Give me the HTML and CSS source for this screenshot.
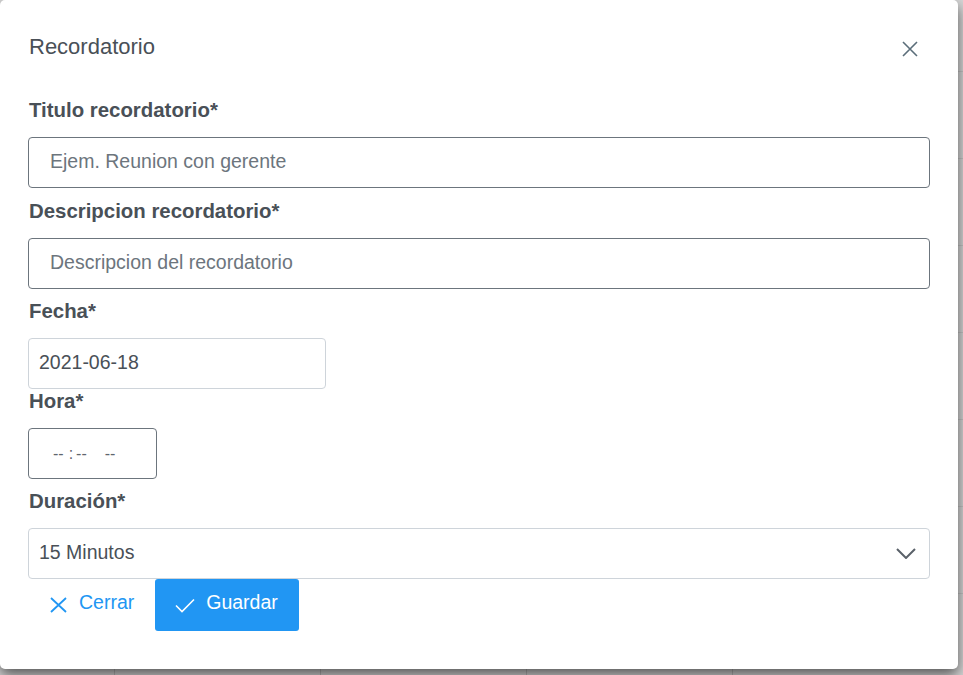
FILE: index.html
```html
<!DOCTYPE html>
<html lang="es">
<head>
<meta charset="utf-8">
<title>Recordatorio</title>
<link rel="stylesheet" href="styles.css">
</head>
<body>
<div class="modal">
  <div class="modal-header">
    <h5 class="modal-title">Recordatorio</h5>
    <button class="close" type="button" aria-label="Cerrar">
      <svg width="16" height="16" viewBox="0 0 16 16"><path d="M1 1L15 15M15 1L1 15" fill="none" stroke="#5b6e7a" stroke-width="1.6"/></svg>
    </button>
  </div>
  <form class="modal-body">
    <div class="group group-first">
      <label class="label">Titulo recordatorio*</label>
      <input class="input input-dark" type="text" placeholder="Ejem. Reunion con gerente">
    </div>
    <div class="group">
      <label class="label">Descripcion recordatorio*</label>
      <input class="input input-dark" type="text" placeholder="Descripcion del recordatorio">
    </div>
    <div class="group group-tight">
      <label class="label">Fecha*</label>
      <input class="input input-light input-date" type="text" value="2021-06-18">
    </div>
    <div class="group">
      <label class="label">Hora*</label>
      <div class="time-field">
        <span class="seg">--</span><span class="colon">:</span><span class="seg">--</span><span class="seg seg-ampm">--</span>
      </div>
    </div>
    <div class="group group-last">
      <label class="label">Duración*</label>
      <div class="select">
        <span class="select-value">15 Minutos</span>
        <svg class="chevron" width="20" height="11" viewBox="0 0 20 11"><path d="M1 1L10 10L19 1" fill="none" stroke="#5a6169" stroke-width="2"/></svg>
      </div>
    </div>
    <div class="actions">
      <button class="btn btn-text" type="button">
        <svg width="17" height="16" viewBox="0 0 17 16"><path d="M1 1L16 15M16 1L1 15" fill="none" stroke="#2196f3" stroke-width="1.8"/></svg>
        <span class="btn-label">Cerrar</span>
      </button>
      <button class="btn btn-primary" type="button">
        <svg width="20" height="15" viewBox="0 0 20 15"><path d="M1 7.5L7 13.5L19 1.5" fill="none" stroke="#ffffff" stroke-width="1.6"/></svg>
        <span class="btn-label">Guardar</span>
      </button>
    </div>
  </form>
</div>
</body>
</html>
```
FILE: styles.css
```css
* { box-sizing: border-box; }
html, body { margin: 0; height: 100%; }
body {
  font-family: "Liberation Sans", Arial, sans-serif;
  overflow: hidden;
  position: relative;
  background-color: #d6d6d6;
  background-image:
    repeating-linear-gradient(90deg, transparent 0 205px, #b8b8b8 205px 206px),
    repeating-linear-gradient(180deg, transparent 0 86px, #c4c4c4 86px 87px);
  background-position: -91px 0, 0 -15px;
}
.modal {
  position: absolute;
  left: 0;
  top: 0;
  width: 958px;
  background: #fff;
  border-radius: 5px;
  box-shadow: 0 6px 14px rgba(0, 0, 0, 0.6);
  padding: 0 28px 38px;
}
.modal-header {
  display: flex;
  justify-content: space-between;
  align-items: flex-start;
  padding-top: 31px;
}
.modal-title {
  margin: 0;
  padding-left: 1px;
  font-size: 22px;
  line-height: 32px;
  font-weight: 400;
  color: #495057;
}
.close {
  width: 32px;
  height: 32px;
  margin: 2px 4px -2px 0;
  padding: 0;
  border: 0;
  background: none;
  display: flex;
  align-items: center;
  justify-content: center;
}
.modal-body {
  display: flex;
  flex-direction: column;
  margin: 35px 0 0;
}
.group {
  display: flex;
  flex-direction: column;
  align-items: flex-start;
  margin-bottom: 10px;
}
.group-first { margin-bottom: 11px; }
.group-tight { margin-bottom: 0; }
.group-last { margin-bottom: 0; align-items: stretch; }
.label {
  font-size: 20.4px;
  line-height: 24px;
  font-weight: 700;
  color: #495057;
  margin-bottom: 15px;
  padding-left: 1px;
}
.input {
  width: 100%;
  height: 51px;
  border-radius: 4px;
  font-family: "Liberation Sans", Arial, sans-serif;
  font-size: 19.5px;
  color: #495057;
  background: #fff;
  outline: none;
  margin: 0;
}
.input-dark {
  border: 1px solid #6c757d;
  padding: 0 20px 2px 21px;
}
.input-dark::placeholder { color: #6c757d; opacity: 1; }
.input-light {
  border: 1px solid #ced4da;
  padding: 0 10px 3px;
}
.input-date { width: 298px; }
.time-field {
  width: 129px;
  height: 51px;
  border: 1px solid #6c757d;
  border-radius: 4px;
  display: flex;
  align-items: center;
  padding-left: 24px;
  font-size: 16px;
  color: #5f666d;
}
.colon { margin: 0 3px 0 5px; }
.seg-ampm { margin-left: 18px; }
.select {
  height: 51px;
  border: 1px solid #ced4da;
  border-radius: 4px;
  display: flex;
  align-items: center;
  justify-content: space-between;
  padding: 0 13px 0 10px;
  font-size: 19.5px;
  color: #495057;
}
.select-value { margin-bottom: 3px; }
.chevron { display: block; }
.actions {
  display: flex;
  height: 52px;
}
.btn {
  display: flex;
  align-items: center;
  height: 52px;
  border: 0;
  border-radius: 3px;
  margin: 0;
  font-family: "Liberation Sans", Arial, sans-serif;
  font-size: 19.5px;
  background: none;
}
.btn svg { display: block; flex: none; }
.btn-label { margin-bottom: 5px; }
.btn-text {
  color: #2196f3;
  padding: 0 21px 0 22px;
  gap: 12px;
}
.btn-primary {
  background: #2196f3;
  color: #fff;
  padding: 0 21px 0 20px;
  gap: 11px;
}
```
